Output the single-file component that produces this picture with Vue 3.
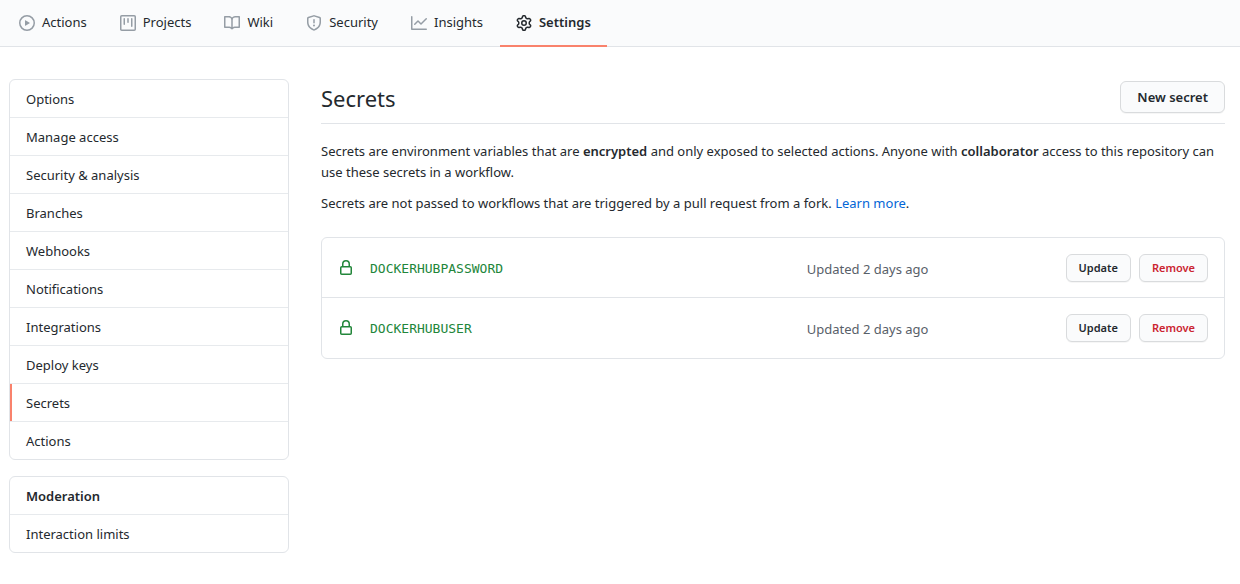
<script setup>
const tabs = [
  { label: 'Actions', icon: 'play' },
  { label: 'Projects', icon: 'project' },
  { label: 'Wiki', icon: 'book' },
  { label: 'Security', icon: 'shield' },
  { label: 'Insights', icon: 'graph' },
  { label: 'Settings', icon: 'gear', active: true },
]

const icons = {
  play: 'M1.5 8a6.5 6.5 0 1113 0 6.5 6.5 0 01-13 0zM8 0a8 8 0 100 16A8 8 0 008 0zM6.379 5.227A.25.25 0 006 5.442v5.117a.25.25 0 00.379.214l4.264-2.559a.25.25 0 000-.428L6.379 5.227z',
  project: 'M1.75 0A1.75 1.75 0 000 1.75v12.5C0 15.216.784 16 1.75 16h12.5A1.75 1.75 0 0016 14.25V1.75A1.75 1.75 0 0014.25 0H1.75zM1.5 1.75a.25.25 0 01.25-.25h12.5a.25.25 0 01.25.25v12.5a.25.25 0 01-.25.25H1.75a.25.25 0 01-.25-.25V1.75zM11.75 3a.75.75 0 00-.75.75v7.5a.75.75 0 001.5 0v-7.5a.75.75 0 00-.75-.75zm-8.25.75a.75.75 0 011.5 0v5.5a.75.75 0 01-1.5 0v-5.5zM8 3a.75.75 0 00-.75.75v3.5a.75.75 0 001.5 0v-3.5A.75.75 0 008 3z',
  book: 'M0 1.75A.75.75 0 01.75 1h4.253c1.227 0 2.317.59 3 1.501A3.744 3.744 0 0111.006 1h4.245a.75.75 0 01.75.75v10.5a.75.75 0 01-.75.75h-4.507a2.25 2.25 0 00-1.591.659l-.622.621a.75.75 0 01-1.06 0l-.622-.621A2.25 2.25 0 005.258 13H.75a.75.75 0 01-.75-.75V1.75zm8.755 3a2.25 2.25 0 012.25-2.25H14.5v9h-3.757c-.71 0-1.4.201-1.992.572l.004-7.322zm-1.504 7.324l.004-5.073-.002-2.253A2.25 2.25 0 005.003 2.5H1.5v9h3.757a3.75 3.75 0 011.994.574z',
  shield: 'M7.467.133a1.75 1.75 0 011.066 0l5.25 1.68A1.75 1.75 0 0115 3.48V7c0 1.566-.32 3.182-1.303 4.682-.983 1.498-2.585 2.813-5.032 3.855a1.7 1.7 0 01-1.33 0c-2.447-1.042-4.049-2.357-5.032-3.855C1.32 10.182 1 8.566 1 7V3.48a1.75 1.75 0 011.217-1.667l5.25-1.68zm.61 1.429a.25.25 0 00-.153 0l-5.25 1.68a.25.25 0 00-.174.238V7c0 1.358.275 2.666 1.057 3.86.784 1.194 2.121 2.34 4.366 3.297a.2.2 0 00.154 0c2.245-.956 3.582-2.104 4.366-3.298C13.225 9.666 13.5 8.36 13.5 7V3.48a.25.25 0 00-.174-.237l-5.25-1.68zM9 10.5a1 1 0 11-2 0 1 1 0 012 0zm-.25-5.75a.75.75 0 10-1.5 0v3a.75.75 0 001.5 0v-3z',
  graph: 'M1.5 1.75a.75.75 0 00-1.5 0v12.5c0 .414.336.75.75.75h14.5a.75.75 0 000-1.5H1.5V1.75zm14.28 2.53a.75.75 0 00-1.06-1.06L10 7.94 7.53 5.47a.75.75 0 00-1.06 0L3.22 8.72a.75.75 0 001.06 1.06L7 7.06l2.47 2.47a.75.75 0 001.06 0l5.25-5.25z',
  gear: 'M7.429 1.525a6.593 6.593 0 011.142 0c.036.003.108.036.137.146l.289 1.105c.147.56.55.967.997 1.189.174.086.341.183.501.29.417.278.97.423 1.53.27l1.102-.303c.11-.03.175.016.195.046.219.31.41.641.573.989.014.031.022.11-.059.19l-.815.806c-.411.406-.562.957-.53 1.456a4.588 4.588 0 010 .582c-.032.499.119 1.05.53 1.456l.815.806c.08.08.073.159.059.19a6.494 6.494 0 01-.573.99c-.02.029-.086.074-.195.045l-1.103-.303c-.559-.153-1.112-.008-1.529.27-.16.107-.327.204-.5.29-.449.222-.851.628-.998 1.189l-.289 1.105c-.029.11-.101.143-.137.146a6.613 6.613 0 01-1.142 0c-.036-.003-.108-.037-.137-.146l-.289-1.105c-.147-.56-.55-.967-.997-1.189a4.502 4.502 0 01-.501-.29c-.417-.278-.97-.423-1.53-.27l-1.102.303c-.11.03-.175-.016-.195-.046a6.492 6.492 0 01-.573-.989c-.014-.031-.022-.11.059-.19l.815-.806c.411-.406.562-.957.53-1.456a4.587 4.587 0 010-.582c.032-.499-.119-1.05-.53-1.456l-.815-.806c-.08-.08-.073-.159-.059-.19a6.44 6.44 0 01.573-.99c.02-.029.086-.075.195-.045l1.103.303c.559.153 1.112.008 1.529-.27.16-.107.327-.204.5-.29.449-.222.851-.628.998-1.189l.289-1.105c.029-.11.101-.143.137-.146zM8 0c-.236 0-.47.01-.701.03-.743.065-1.29.615-1.458 1.261l-.29 1.106c-.017.066-.078.158-.211.224a5.994 5.994 0 00-.668.386c-.123.082-.233.09-.3.071L3.27 2.776c-.644-.177-1.392.02-1.82.63a7.977 7.977 0 00-.704 1.217c-.315.675-.111 1.422.363 1.891l.815.806c.05.048.098.147.088.294a6.084 6.084 0 000 .772c.01.147-.038.246-.088.294l-.815.806c-.474.469-.678 1.216-.363 1.891.2.428.436.835.704 1.218.428.609 1.176.806 1.82.63l1.103-.303c.066-.019.176-.011.299.071.213.143.436.272.668.386.133.066.194.158.212.224l.289 1.106c.169.646.715 1.196 1.458 1.26a8.094 8.094 0 001.402 0c.743-.064 1.29-.614 1.458-1.26l.29-1.106c.017-.066.078-.158.211-.224a5.98 5.98 0 00.668-.386c.123-.082.233-.09.3-.071l1.102.302c.644.177 1.392-.02 1.82-.63.268-.382.505-.789.704-1.217.315-.675.111-1.422-.364-1.891l-.814-.806c-.05-.048-.098-.147-.088-.294a6.1 6.1 0 000-.772c-.01-.147.039-.246.088-.294l.814-.806c.475-.469.679-1.216.364-1.891a7.992 7.992 0 00-.704-1.218c-.428-.609-1.176-.806-1.82-.63l-1.103.303c-.066.019-.176.011-.299-.071a5.991 5.991 0 00-.668-.386c-.133-.066-.194-.158-.212-.224L10.16 1.29C9.99.645 9.444.095 8.701.031A8.094 8.094 0 008 0zm1.5 8a1.5 1.5 0 11-3 0 1.5 1.5 0 013 0zM11 8a3 3 0 11-6 0 3 3 0 016 0z',
  lock: 'M4 4v2h-.25A1.75 1.75 0 002 7.75v5.5c0 .966.784 1.75 1.75 1.75h8.5A1.75 1.75 0 0014 13.25v-5.5A1.75 1.75 0 0012.25 6H12V4a4 4 0 10-8 0zm6.5 2V4a2.5 2.5 0 00-5 0v2h5zM12 7.5h.25a.25.25 0 01.25.25v5.5a.25.25 0 01-.25.25h-8.5a.25.25 0 01-.25-.25v-5.5a.25.25 0 01.25-.25H12z',
}

const menu = [
  'Options', 'Manage access', 'Security & analysis', 'Branches', 'Webhooks',
  'Notifications', 'Integrations', 'Deploy keys', 'Secrets', 'Actions',
]
const current = 'Secrets'

const secrets = [
  { name: 'DOCKERHUBPASSWORD', updated: 'Updated 2 days ago' },
  { name: 'DOCKERHUBUSER', updated: 'Updated 2 days ago' },
]
</script>

<template>
  <div class="page">
    <nav class="tabs" aria-label="Repository">
      <a v-for="tab in tabs" :key="tab.label" href="#" class="tab" :class="{ active: tab.active }">
        <svg class="icon" viewBox="0 0 16 16" aria-hidden="true"><path fill-rule="evenodd" :d="icons[tab.icon]" /></svg>
        <span>{{ tab.label }}</span>
      </a>
    </nav>

    <div class="layout">
      <aside class="sidebar">
        <nav class="menu" aria-label="Repository settings">
          <a v-for="item in menu" :key="item" href="#" class="menu-item" :class="{ selected: item === current }">{{ item }}</a>
        </nav>
        <nav class="menu" aria-labelledby="moderation">
          <h2 id="moderation" class="menu-item menu-heading">Moderation</h2>
          <a href="#" class="menu-item">Interaction limits</a>
        </nav>
      </aside>

      <main class="content">
        <header class="subhead">
          <h1>Secrets</h1>
          <button type="button" class="btn">New secret</button>
        </header>

        <p>
          Secrets are environment variables that are <strong>encrypted</strong> and only exposed to selected actions.
          Anyone with <strong>collaborator</strong> access to this repository can use these secrets in a workflow.
        </p>
        <p>
          Secrets are not passed to workflows that are triggered by a pull request from a fork.
          <a href="#" class="link">Learn more</a>.
        </p>

        <ul class="secrets">
          <li v-for="secret in secrets" :key="secret.name" class="secret">
            <svg class="icon lock" viewBox="0 0 16 16" aria-hidden="true"><path fill-rule="evenodd" :d="icons.lock" /></svg>
            <code>{{ secret.name }}</code>
            <span class="updated">{{ secret.updated }}</span>
            <span class="buttons">
              <button type="button" class="btn small">Update</button>
              <button type="button" class="btn small danger">Remove</button>
            </span>
          </li>
        </ul>
      </main>
    </div>
  </div>
</template>

<style>
body {
  background: #fff;
}
</style>

<style scoped>
.page {
  color: #24292e;
  font-family: "Noto Sans", "Open Sans", sans-serif;
  font-size: 13px;
  line-height: 21px;
}

.page * {
  box-sizing: border-box;
}

a {
  color: inherit;
  text-decoration: none;
}

.tabs {
  display: flex;
  gap: 1px;
  padding-left: 3px;
  background: #fafbfc;
  box-shadow: inset 0 -1px #e1e4e8;
}

.tab {
  display: flex;
  align-items: center;
  gap: 7px;
  height: 47px;
  padding: 0 16px;
  border-bottom: 2px solid transparent;
}

.tab.active {
  border-bottom-color: #f9826c;
  font-weight: 600;
}

.icon {
  width: 16px;
  height: 16px;
  flex: none;
  fill: #959da5;
}

.tab.active .icon {
  fill: #24292e;
}

.layout {
  display: flex;
  gap: 32px;
  padding: 32px 15px 32px 9px;
}

.sidebar {
  flex: 0 0 280px;
}

.menu {
  margin-bottom: 16px;
  overflow: hidden;
  border: 1px solid #e1e4e8;
  border-radius: 6px;
}

.menu-item {
  display: block;
  margin: 0;
  padding: 9px 16px 7px;
  border-bottom: 1px solid #e7eaed;
}

.menu-item:last-child {
  border-bottom: 0;
}

.menu-item.selected {
  box-shadow: inset 2px 0 #f9826c;
}

.menu-heading {
  font-size: 13px;
  font-weight: 600;
}

.content {
  flex: 1;
  min-width: 0;
}

.subhead {
  display: flex;
  align-items: center;
  justify-content: space-between;
  margin-bottom: 17px;
  padding: 2px 0 10px;
  border-bottom: 1px solid #e1e4e8;
}

h1 {
  margin: 0;
  padding-top: 2px;
  font-size: 22px;
  font-weight: 400;
  line-height: 30px;
}

p {
  margin: 0 0 10px;
}

strong {
  font-weight: 600;
}

.link {
  color: #0366d6;
}

.btn {
  height: 32px;
  padding: 0 16px;
  border: 1px solid #d9dbdd;
  border-radius: 6px;
  background: #fafbfc;
  box-shadow: 0 1px 0 rgba(27, 31, 35, 0.04);
  color: #24292e;
  font: 600 13px/20px "Noto Sans", "Open Sans", sans-serif;
  white-space: nowrap;
}

.btn.small {
  height: 28px;
  padding: 0 12px;
  font-size: 11px;
}

.btn.danger {
  color: #cb2431;
}

.secrets {
  margin: 23px 0 0;
  padding: 0;
  border: 1px solid #e1e4e8;
  border-radius: 6px;
  list-style: none;
}

.secret {
  display: grid;
  grid-template-columns: 32px 27fr 16fr auto;
  align-items: center;
  margin-top: -1px;
  padding: 16px;
  border-top: 1px solid #e1e4e8;
}

.secret:first-child {
  border-top-color: transparent;
}

.lock {
  fill: #22863a;
}

code {
  padding-top: 2px;
  color: #22863a;
  font: 13px/20px "DejaVu Sans Mono", monospace;
}

.updated {
  padding-top: 2px;
  color: #586069;
}

.buttons {
  display: flex;
  gap: 8px;
}
</style>
